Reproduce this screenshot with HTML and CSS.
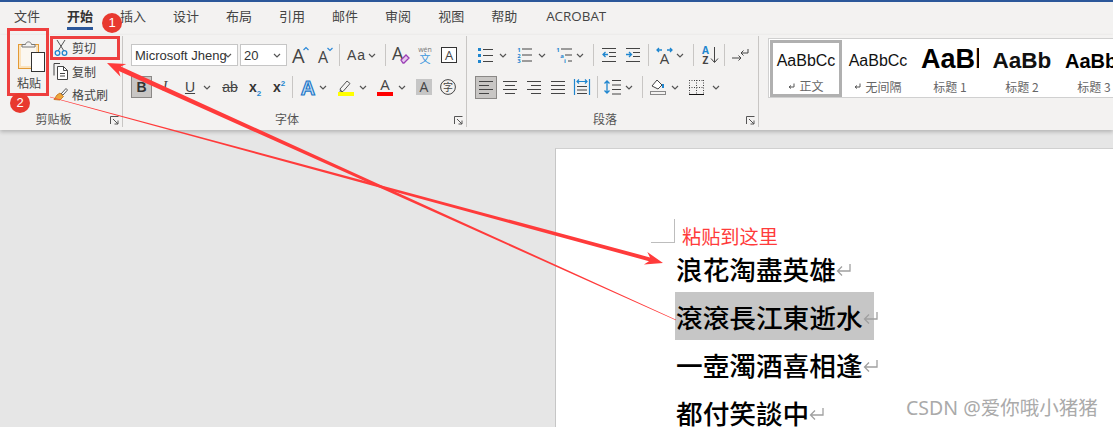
FILE: index.html
```html
<!DOCTYPE html>
<html lang="zh">
<head>
<meta charset="utf-8">
<title>Word</title>
<link rel="stylesheet" href="styles.css">
</head>
<body>
<svg class="defs" width="0" height="0"><defs>
  <symbol id="chev" viewBox="0 0 8 5"><polyline points="1,1 4,4 7,1" fill="none" stroke="#555" stroke-width="1.2"/></symbol>
  <symbol id="ret" viewBox="0 0 15 13"><path d="M14 1v7H2M6 3.500L1.500 8 6 12.500" fill="none" stroke="#a0a0a0" stroke-width="1.3"/></symbol>
  <symbol id="ret-small" viewBox="0 0 7 6"><path d="M6 .5v3.500H1.500M3 2.500L1 4l2 1.500" fill="none" stroke="#555"/></symbol>
  <symbol id="launch" viewBox="0 0 9 9"><path d="M.5 8V.5H8.500M3 3l5 5M8 4.500V8H4.500" fill="none" stroke="#555"/></symbol>
</defs></svg>
<div class="app">
  <div class="titlebar"></div>
  <nav class="tabs">
    <span class="tab">文件</span><span class="tab active">开始</span><span class="tab">插入</span><span class="tab">设计</span><span class="tab">布局</span><span class="tab">引用</span><span class="tab">邮件</span><span class="tab">审阅</span><span class="tab">视图</span><span class="tab">帮助</span><span class="tab latin">ACROBAT</span>
  </nav>
  <section class="ribbon">
    <div class="group clip">
      <div class="clip-body">
        <div class="paste">
          <svg width="27" height="33" viewBox="0 0 27 33"><rect x=".5" y="4.500" width="20" height="24" fill="#fbe3bd" stroke="#e39a35"/><rect x="3" y="7" width="15" height="19" fill="#fbf7f0"/><path d="M4 7V4.500h3.500C8 1 13 1 13.500 4.500H17V7z" fill="#f3f2f1" stroke="#777"/><rect x="13.500" y="12.500" width="13" height="19" fill="#fff" stroke="#333"/></svg>
          <span>粘贴</span>
        </div>
        <div class="clip-list">
          <div class="clip-item"><svg width="16" height="18" viewBox="0 0 16 18"><path d="M4 1l7 11M12 1L5 12" fill="none" stroke="#555"/><circle cx="4.500" cy="14" r="2.300" fill="none" stroke="#1f86cf" stroke-width="1.300"/><circle cx="11.500" cy="14" r="2.300" fill="none" stroke="#1f86cf" stroke-width="1.300"/></svg><span>剪切</span></div>
          <div class="clip-item"><svg width="16" height="17" viewBox="0 0 16 17"><path d="M1 12.500V.5h6" fill="none" stroke="#444"/><path d="M4.500 3.500h6l4 4v9h-10z" fill="#fff" stroke="#444"/><path d="M10.500 3.500v4h4M7 10.500h5M7 13h5" fill="none" stroke="#444"/></svg><span>复制</span></div>
          <div class="clip-item"><svg width="16" height="16" viewBox="0 0 16 16"><path d="M8 7l5-5.500 1.500 1.500L10 8z" fill="#fff" stroke="#555"/><path d="M7 6l3.500 3.500L7 13 1 12.500 4 8z" fill="#eea63c" stroke="#c9822a"/></svg><span>格式刷</span></div>
        </div>
      </div>
      <div class="group-foot"><span>剪贴板</span><svg class="launcher" width="9" height="9"><use href="#launch"/></svg></div>
    </div>

    <div class="group font">
      <div class="row">
        <div class="combo w107"><span class="combo-text">Microsoft Jheng</span><svg class="chev" width="8" height="5"><use href="#chev"/></svg></div>
        <div class="combo w47 g2"><span class="combo-text">20</span><svg class="chev" width="8" height="5"><use href="#chev"/></svg></div>
        <svg class="g6" width="16" height="20" viewBox="0 0 16 20"><text x="-1" y="18" class="ig" font-size="20">A</text><polyline points="10.500,5 13,2.500 15.500,5" fill="none" stroke="#2b88d8" stroke-width="1.200"/></svg>
        <svg class="g9" width="15" height="20" viewBox="0 0 15 20"><text x="0" y="18" class="ig" font-size="16">A</text><polyline points="9.500,3 12,5.500 14.500,3" fill="none" stroke="#2b88d8" stroke-width="1.200"/></svg>
        <span class="sep g6"></span>
        <span class="aa g7">Aa</span><svg class="chev g2" width="8" height="5"><use href="#chev"/></svg>
        <span class="sep g9"></span>
        <svg class="g7" width="16" height="20" viewBox="0 0 16 20"><text x="-1" y="15" class="ig" font-size="18">A</text><path d="M8 15l5-5 3 3-5 5h-1z" fill="#e6c8ef" stroke="#9b3fb5" stroke-width="1.300"/></svg>
        <svg class="g9" width="14" height="20" viewBox="0 0 14 20"><text x="7" y="7" class="wen">wén</text><text x="7" y="18" class="wenzi">文</text></svg>
        <svg class="g9" width="16" height="16" viewBox="0 0 16 16"><rect x=".5" y=".5" width="15" height="15" fill="#fff" stroke="#333"/><text x="8" y="13" class="im" font-size="13">A</text></svg>
      </div>
      <div class="row row2">
        <span class="pressed bold-btn">B</span>
        <span class="glyph italic g9">I</span>
        <span class="glyph under g15">U</span>
        <svg class="chev g7" width="8" height="5"><use href="#chev"/></svg>
        <span class="glyph strike g10">ab</span>
        <span class="glyph sub g9">x<sub>2</sub></span>
        <span class="glyph sub g10">x<sup>2</sup></span>
        <span class="sep g6"></span>
        <svg class="g7" width="16" height="19" viewBox="0 0 16 19"><text x="8" y="17" class="effect" font-size="20">A</text></svg>
        <svg class="chev g3" width="8" height="5"><use href="#chev"/></svg>
        <svg class="g11" width="16" height="18" viewBox="0 0 16 18"><path d="M2 11l7-8 3 2.500-7 8H3z" fill="none" stroke="#555"/><path d="M1 13.500h3l-1-2z" fill="#555"/><rect y="14" width="16" height="4" fill="#ff0"/></svg>
        <svg class="chev g5" width="8" height="5"><use href="#chev"/></svg>
        <svg class="g10" width="16" height="18" viewBox="0 0 16 18"><text x="8" y="12" class="im" font-size="15">A</text><rect y="14" width="16" height="4" fill="#f00"/></svg>
        <svg class="chev g5" width="8" height="5"><use href="#chev"/></svg>
        <svg class="g10" width="16" height="16" viewBox="0 0 16 16"><rect width="16" height="16" fill="#c6c6c6"/><text x="8" y="13" class="im" font-size="14">A</text></svg>
        <svg class="g8" width="16" height="16" viewBox="0 0 16 16"><circle cx="8" cy="8" r="7.400" fill="none" stroke="#444"/><text x="8" y="12" class="zi">字</text></svg>
      </div>
      <div class="group-foot"><span>字体</span><svg class="launcher" width="9" height="9"><use href="#launch"/></svg></div>
    </div>

    <div class="group para">
      <div class="row">
        <svg class="g3" width="15" height="15" viewBox="0 0 15 15"><path d="M0 0h3v3H0zM0 6h3v3H0zM0 12h3v3H0z" fill="#1f86cf"/><path d="M5 1.500h10M5 7.500h10M5 13.500h10" stroke="#444"/></svg>
        <svg class="chev g6" width="8" height="5"><use href="#chev"/></svg>
        <svg class="g10" width="15" height="16" viewBox="0 0 15 16"><text x="2" y="5" class="num">1</text><text x="2" y="10.500" class="num">2</text><text x="2" y="16" class="num">3</text><path d="M5 2h10M5 8h10M5 14h10" stroke="#444"/></svg>
        <svg class="chev g6" width="8" height="5"><use href="#chev"/></svg>
        <svg class="g10" width="16" height="16" viewBox="0 0 16 16"><text x="2" y="5" class="num">1</text><text x="6" y="10.500" class="num">a</text><text x="9" y="16" class="num">i</text><path d="M5 2h11M9 8h7M12 14h4" stroke="#444"/></svg>
        <svg class="chev g4" width="8" height="5"><use href="#chev"/></svg>
        <span class="sep g9"></span>
        <svg class="g8" width="14" height="14" viewBox="0 0 14 14"><path d="M0 .5h14M7 4.500h7M7 8.500h7M0 13.500h14" stroke="#444"/><path d="M6 6.500H1M3.500 4L1 6.500 3.500 9" fill="none" stroke="#1f86cf" stroke-width="1.300"/></svg>
        <svg class="g10" width="14" height="14" viewBox="0 0 14 14"><path d="M0 .5h14M7 4.500h7M7 8.500h7M0 13.500h14" stroke="#444"/><path d="M0 6.500h5M3 4l2.500 2.500L3 9" fill="none" stroke="#1f86cf" stroke-width="1.300"/></svg>
        <span class="sep g8"></span>
        <svg class="g7" width="17" height="17" viewBox="0 0 17 17"><path d="M1 3h5M3 1L1 3l2 2M11 3h5M14 1l2 2-2 2" fill="none" stroke="#1f86cf" stroke-width="1.300"/><text x="8.500" y="17" class="im" font-size="15">A</text></svg>
        <svg class="chev g3" width="8" height="5"><use href="#chev"/></svg>
        <span class="sep g9"></span>
        <svg class="g7" width="17" height="18" viewBox="0 0 17 18"><text x="4.500" y="8" class="az blue">A</text><text x="4.500" y="18" class="az">Z</text><path d="M13.500 1v15M10 12.500l3.500 4 3.500-4" fill="none" stroke="#444"/></svg>
        <span class="sep g6"></span>
        <svg class="g7" width="16" height="15" viewBox="0 0 16 15"><path d="M16 1v4H9M11.500 2.500L9 5l2.500 2.500M0 10h9M6.500 7.500L9 10l-2.500 2.500" fill="none" stroke="#444"/></svg>
      </div>
      <div class="row row2">
        <span class="pressed align-btn"><svg width="14" height="13" viewBox="0 0 14 13"><path d="M0 .5h14M0 4.500h10M0 8.500h14M0 12.500h10" stroke="#444"/></svg></span>
        <svg class="g6" width="14" height="13" viewBox="0 0 14 13"><path d="M0 .5h14M2 4.500h10M0 8.500h14M2 12.500h10" stroke="#444"/></svg>
        <svg class="g10" width="14" height="13" viewBox="0 0 14 13"><path d="M0 .5h14M4 4.500h10M0 8.500h14M4 12.500h10" stroke="#444"/></svg>
        <svg class="g10" width="14" height="13" viewBox="0 0 14 13"><path d="M0 .5h14M0 4.500h14M0 8.500h14M0 12.500h14" stroke="#444"/></svg>
        <svg class="g9" width="16" height="16" viewBox="0 0 16 16"><path d="M.5 0v16M15.500 0v16M3 2.500h10M5 .5L3 2.500l2 2M11 .5l2 2-2 2" fill="none" stroke="#1f86cf" stroke-width="1.200"/><path d="M3 7.500h10M3 11h10M3 14.500h10" stroke="#444"/></svg>
        <span class="sep g7"></span>
        <svg class="g6" width="17" height="16" viewBox="0 0 17 16"><path d="M3 2v12M.5 4.500L3 2l2.500 2.500M.5 11.500L3 14l2.500-2.500" fill="none" stroke="#1f86cf" stroke-width="1.300"/><path d="M8 1.500h9M8 6h9M8 10.500h9M8 15h9" stroke="#444"/></svg>
        <svg class="chev g4" width="8" height="5"><use href="#chev"/></svg>
        <span class="sep g9"></span>
        <svg class="g7" width="16" height="16" viewBox="0 0 16 16"><path d="M2 7l5-6 5 5-4 4z" fill="#fff" stroke="#444"/><path d="M13 5v4" stroke="#1f86cf" stroke-width="2"/><rect x=".5" y="12.500" width="15" height="3" fill="#f3f2f1" stroke="#888"/></svg>
        <svg class="chev g5" width="8" height="5"><use href="#chev"/></svg>
        <svg class="g10" width="15" height="15" viewBox="0 0 15 15"><path d="M.5 0v14M14.500 0v14M0 .5h15M7.500 0v14M0 7.500h15" stroke="#444" stroke-dasharray="1 1.500"/><path d="M0 14.500h15" stroke="#111"/></svg>
        <svg class="chev g8" width="8" height="5"><use href="#chev"/></svg>
      </div>
      <div class="group-foot"><span>段落</span><svg class="launcher" width="9" height="9"><use href="#launch"/></svg></div>
    </div>

    <div class="gallery">
      <div class="style selected"><span class="sample">AaBbCc</span><span class="style-name"><svg width="7" height="6"><use href="#ret-small"/></svg>正文</span></div>
      <div class="style"><span class="sample">AaBbCc</span><span class="style-name"><svg width="7" height="6"><use href="#ret-small"/></svg>无间隔</span></div>
      <div class="style"><span class="sample h1">AaBb</span><span class="style-name">标题 1</span></div>
      <div class="style"><span class="sample h2">AaBb</span><span class="style-name">标题 2</span></div>
      <div class="style"><span class="sample h3">AaBb</span><span class="style-name">标题 3</span></div>
    </div>
  </section>

  <main class="canvas">
    <article class="page">
      <span class="corner"></span>
      <p class="note">粘贴到这里</p>
      <p class="line">浪花淘盡英雄<svg width="15" height="13"><use href="#ret"/></svg></p>
      <p class="line"><span class="selection">滾滾長江東逝水<svg width="15" height="13"><use href="#ret"/></svg></span></p>
      <p class="line">一壺濁酒喜相逢<svg width="15" height="13"><use href="#ret"/></svg></p>
      <p class="line">都付笑談中<svg width="15" height="13"><use href="#ret"/></svg></p>
    </article>
  </main>

  <svg class="annot" width="1113" height="427" viewBox="0 0 1113 427">
    <polygon points="107,63 126.300,64 120.800,66.500 676.200,319.700 675.800,320.300 118.800,71.100 120.500,76.800" fill="#ff3b3b"/>
    <polygon points="663,263 647.300,252 650,257.400 50.100,96.700 49.900,97.300 649,261.200 643.900,264.600" fill="#ff3b3b"/>
  </svg>
  <div class="box box-paste"></div>
  <div class="box box-cut"></div>
  <span class="badge badge-1">1</span>
  <span class="badge badge-2">2</span>
  <span class="watermark">CSDN @爱你哦小猪猪</span>
</div>
</body>
</html>
```
FILE: styles.css
```css
* { box-sizing: border-box; }
html, body { margin: 0; padding: 0; height: 100%; overflow: hidden; }
body { font-family: "Liberation Sans", "Noto Sans CJK SC", sans-serif; color: #444; }
.defs { position: absolute; }
svg { display: block; flex: none; overflow: visible; }
.app { position: relative; width: 1113px; height: 427px; overflow: hidden; background: #e6e6e6; }
.titlebar { height: 2px; background: #2b579a; }

.tabs { display: flex; gap: 27px; height: 33px; padding: 0 0 0 14px; background: #f3f2f1; font-size: 13px; }
.tab { height: 28px; padding-top: 5px; line-height: 18px; font-family: "Noto Sans CJK SC", sans-serif; color: #444; }
.tab.active { font-weight: 700; color: #333; border-bottom: 3px solid #2b579a; }
.tab.latin { margin-left: 2px; font-family: "Open Sans", sans-serif; font-size: 13.400px; }

.ribbon { position: relative; z-index: 1; display: flex; height: 95px; background: #f3f2f1; box-shadow: 0 2px 4px rgba(0, 0, 0, .22); }
.group { display: flex; flex-direction: column; flex: none; height: 91px; margin-top: 1px; border-right: 1px solid #c8c6c4; }
.clip { width: 123px; }
.font { width: 344px; padding-top: 8px; padding-left: 8px; }
.para { width: 292px; padding-top: 8px; padding-left: 8px; }
.group-foot { display: grid; grid-template-columns: 1fr 15px; align-items: center; height: 16px; margin-top: auto; font-size: 12px; line-height: 16px; font-family: "Noto Sans CJK SC", sans-serif; text-align: center; color: #555; }
.font .group-foot, .para .group-foot { margin-left: -8px; }
.launcher { justify-self: center; margin-top: 3px; }

.clip-body { display: flex; }
.paste { display: flex; flex-direction: column; align-items: center; width: 41px; margin-left: 7px; padding-top: 4px; padding-left: 8px; font-family: "Noto Sans CJK SC", sans-serif; font-size: 12px; }
.paste span { margin-top: 1px; margin-left: -5px; line-height: 18px; white-space: nowrap; }
.clip-list { width: 72px; margin-left: 2px; }
.clip-item { display: flex; align-items: center; gap: 3px; height: 23.500px; padding-left: 3px; font-family: "Noto Sans CJK SC", sans-serif; font-size: 12px; }

.row { display: flex; align-items: center; height: 22px; }
.row2 { margin-top: 10px; }
.g2 { margin-left: 2px; } .g3 { margin-left: 3px; } .g4 { margin-left: 4px; } .g5 { margin-left: 5px; }
.g6 { margin-left: 6px; } .g7 { margin-left: 7px; } .g8 { margin-left: 8px; } .g9 { margin-left: 9px; }
.g10 { margin-left: 10px; } .g11 { margin-left: 11px; } .g15 { margin-left: 15px; }

.combo { display: flex; align-items: center; height: 22px; padding: 0 5px 0 3px; background: #fff; border: 1px solid #c6c6c6; font-size: 13px; color: #333; }
.w107 { width: 107px; } .w47 { width: 47px; }
.combo-text { flex: 1; min-width: 0; white-space: nowrap; }
.chev { flex: none; }
.sep { flex: none; width: 1px; height: 22px; background: #c8c6c4; }
.aa { width: 19px; font-size: 14px; letter-spacing: 1px; color: #444; }

.pressed { display: flex; align-items: center; justify-content: center; background: #c8c6c4; border: 1px solid #8a8886; }
.bold-btn { width: 21px; height: 22px; font-family: "Liberation Sans", sans-serif; font-weight: 700; font-size: 14px; color: #333; }
.align-btn { width: 22px; height: 23px; }
.glyph { display: block; text-align: center; font-size: 14px; line-height: 18px; color: #444; }
.italic { width: 8px; font-family: "Liberation Serif", serif; font-style: italic; }
.under { width: 12px; text-decoration: underline; }
.strike { width: 18px; text-decoration: line-through; }
.sub { width: 14px; font-weight: 700; color: #333; }
.sub sub, .sub sup { font-size: 8px; line-height: 0; color: #1f86cf; }

.ig, .im, .az, .num, .wen, .wenzi, .zi, .effect { font-family: "Open Sans", "Liberation Sans", sans-serif; fill: #444; }
.im { text-anchor: middle; }
.az { font-size: 10px; text-anchor: middle; font-weight: 700; }
.az.blue { fill: #1f86cf; }
.num { font-size: 6px; font-weight: 700; fill: #1f86cf; text-anchor: middle; }
.wen { font-size: 7px; text-anchor: middle; fill: #777; }
.wenzi { font-size: 11px; text-anchor: middle; fill: #3a96dd; font-family: "Noto Sans CJK SC", sans-serif; }
.zi { font-size: 10px; text-anchor: middle; font-family: "Noto Sans CJK SC", sans-serif; }
.effect { text-anchor: middle; font-weight: 700; fill: #cfe6f8; stroke: #1f78c8; stroke-width: 1.200px; font-family: "Liberation Sans", sans-serif; }

.gallery { display: flex; flex: 1; min-width: 0; height: 60px; margin: 3px 0 0 9px; padding: 1px 0 1px 1px; background: #fff; border: 1px solid #d0d0d0; border-right: 0; overflow: hidden; }
.style { display: flex; flex-direction: column; align-items: center; flex: none; width: 72px; height: 57px; padding-top: 8px; overflow: hidden; }
.selected { padding-top: 5px; border: 3px solid #b0b0b0; }
.sample { display: block; height: 26px; line-height: 26px; font-size: 16px; color: #111; white-space: nowrap; }
.h1 { width: 58px; overflow: hidden; font-size: 27px; font-weight: 700; color: #000; margin-top: -2px; margin-bottom: 2px; }
.h2 { font-size: 22.500px; font-weight: 700; color: #111; }
.h3 { width: 58px; font-size: 20px; font-weight: 700; color: #000; align-self: flex-start; margin-left: 7px; }
.style-name { display: flex; align-items: center; gap: 4px; height: 18px; margin-top: 3px; font-size: 12px; font-family: "Noto Sans CJK SC", sans-serif; color: #666; }

.canvas { height: 297px; padding: 18px 0 0 555px; background: #e6e6e6; overflow: hidden; }
.page { position: relative; width: 558px; height: 300px; padding: 77px 0 0 121px; background: #fff; border-left: 1px solid #c6c6c6; border-top: 1px solid #d0d0d0; }
.corner { position: absolute; left: 95px; top: 70px; width: 24px; height: 24px; border-right: 1px solid #bdbdbd; border-bottom: 1px solid #bdbdbd; }
.note { margin: 0 0 -1px 5px; height: 20px; line-height: 20px; font-size: 19.200px; font-family: "Noto Sans CJK SC", sans-serif; color: #ff3b3b; }
.line { display: flex; align-items: center; height: 48px; margin: -2px 0 2px -1px; font-size: 26.670px; font-family: "Noto Sans CJK TC", sans-serif; color: #000; font-weight: 500; white-space: nowrap; }
.line svg { margin-top: 2px; }
.selection { display: flex; align-items: center; width: 199px; height: 48px; margin-left: -1px; padding-left: 1px; background: #c6c6c6; }

.annot { position: absolute; left: 0; top: 0; z-index: 2; pointer-events: none; }
.box { position: absolute; z-index: 3; border: 3px solid #ee3f3f; }
.box-paste { left: 7px; top: 28px; width: 42px; height: 68px; }
.box-cut { left: 50px; top: 36px; width: 70px; height: 24px; }
.badge { position: absolute; z-index: 3; width: 20px; height: 20px; border-radius: 50%; background: #e8392f; color: #fff; font-size: 13px; line-height: 20px; text-align: center; }
.badge-1 { left: 102px; top: 13px; }
.badge-2 { left: 10px; top: 93px; }
.watermark { position: absolute; z-index: 3; left: 906px; top: 395px; font-size: 19.500px; line-height: 26px; font-family: "Noto Sans", "Noto Sans CJK SC", sans-serif; color: #aaa; white-space: nowrap; }
```
